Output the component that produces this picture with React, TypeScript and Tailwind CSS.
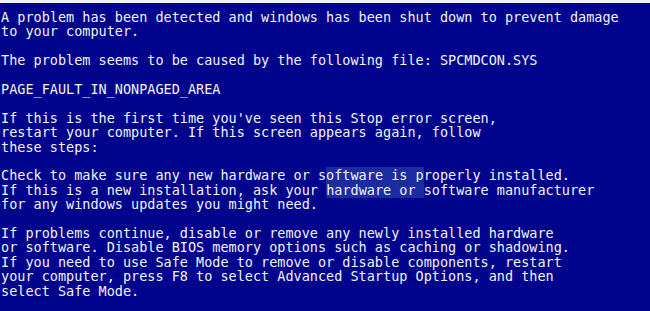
const paragraphs: React.ReactNode[][] = [
  [
    "A problem has been detected and windows has been shut down to prevent damage",
    "to your computer.",
  ],
  ["The problem seems to be caused by the following file: SPCMDCON.SYS"],
  ["PAGE_FAULT_IN_NONPAGED_AREA"],
  [
    "If this is the first time you've seen this Stop error screen,",
    "restart your computer. If this screen appears again, follow",
    "these steps:",
  ],
  [
    <>
      Check to make sure any new hardware or s
      <span className="bg-[#1b2ba0]">oftware is p</span>roperly installed.
    </>,
    <>
      If this is a new installation, ask your{" "}
      <span className="bg-[#1b2ba0]">hardware or </span>software manufacturer
    </>,
    "for any windows updates you might need.",
  ],
  [
    "If problems continue, disable or remove any newly installed hardware",
    "or software. Disable BIOS memory options such as caching or shadowing.",
    "If you need to use Safe Mode to remove or disable components, restart",
    "your computer, press F8 to select Advanced Startup Options, and then",
    "select Safe Mode.",
  ],
];

export default function App() {
  return (
    <div className="w-[650px] h-[311px] overflow-hidden bg-[#00048c] flex flex-col">
      <div className="h-[3px] bg-[#f2f2f2] shrink-0" />
      <div className="pt-[7px] pl-[1px] flex flex-col gap-[14.4px] text-[13.5px] leading-[14.4px] text-[#f2f2f6] whitespace-pre font-['DejaVu_Sans_Mono',monospace]">
        {paragraphs.map((lines, i) => (
          <div key={i}>
            {lines.map((line, j) => (
              <div key={j}>{line}</div>
            ))}
          </div>
        ))}
      </div>
    </div>
  );
}
